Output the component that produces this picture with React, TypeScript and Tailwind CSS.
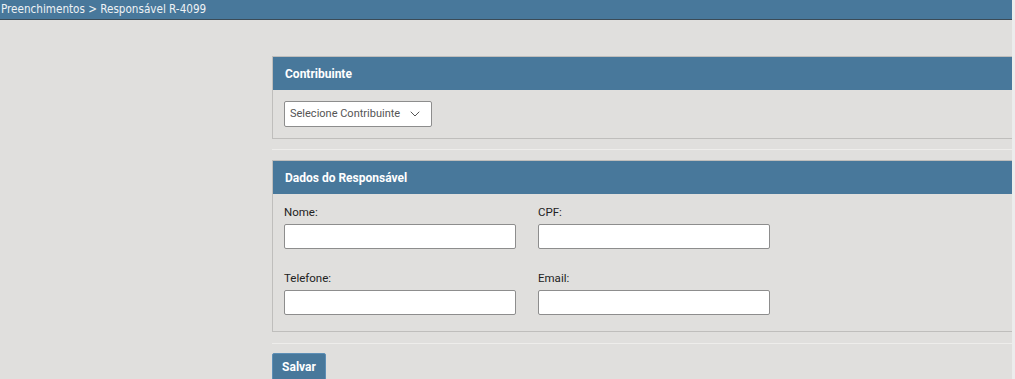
import { ChevronDown } from "lucide-react"

function Panel({ title, children }: { title: string; children: React.ReactNode }) {
  return (
    <div className="border border-[#bfbebc] border-r-0">
      <div className="flex h-[33px] items-center bg-[#48789b] px-3 text-[12px] font-bold text-white">
        {title}
      </div>
      {children}
    </div>
  )
}

function Field({ label }: { label: string }) {
  return (
    <div className="flex w-[232px] flex-col">
      <label className="h-[19px] text-[11.5px] leading-[19px] text-[#222]">{label}</label>
      <input
        type="text"
        className="mt-[2px] h-[25px] w-full rounded-[2px] border border-[#8d8d8d] bg-white px-2 text-[12px] outline-none"
      />
    </div>
  )
}

function Divider() {
  return <div className="h-px bg-[#eeedeb]" />
}

export default function App() {
  return (
    <div className="flex h-[379px] w-[1015px] overflow-hidden bg-[#e0dfdd] font-['Roboto',sans-serif]">
      <div className="w-[1012px] shrink-0 overflow-hidden">
        <div className="h-[20px] border-b border-[#3b4b57] bg-[#48789b] pl-[1px] font-['DejaVu_Sans_Condensed','DejaVu_Sans',sans-serif] text-[11.6px] leading-[19px] text-[#eef2f5]">
          Preenchimentos &gt; Responsável R-4099
        </div>

        <div className="ml-[272px] w-[760px] pt-[36px]">
          <Panel title="Contribuinte">
            <div className="px-[11px] pb-[11px] pt-[11px]">
              <button className="flex h-[26px] w-[148px] items-center justify-between whitespace-nowrap rounded-[2px] border border-[#8d8d8d] bg-white pl-[5px] pr-[8px] text-[11px] text-[#555]">
                <span>Selecione Contribuinte</span>
                <ChevronDown className="h-4 w-4 shrink-0 text-[#555]" strokeWidth={1.5} />
              </button>
            </div>
          </Panel>

          <div className="my-[10px]">
            <Divider />
          </div>

          <Panel title="Dados do Responsável">
            <div className="flex flex-col gap-[20px] px-[11px] pb-[16px] pt-[9px]">
              <div className="flex gap-[22px]">
                <Field label="Nome:" />
                <Field label="CPF:" />
              </div>
              <div className="flex gap-[22px]">
                <Field label="Telefone:" />
                <Field label="Email:" />
              </div>
            </div>
          </Panel>

          <div className="mb-[9px] mt-[11px]">
            <Divider />
          </div>

          <button className="h-[28px] w-[54px] rounded-[2px] border border-[#5d8fb6] bg-[#48789b] text-[12px] font-bold text-white">
            Salvar
          </button>
        </div>
      </div>
      <div className="w-[3px] shrink-0 bg-[#ececec]" />
    </div>
  )
}
